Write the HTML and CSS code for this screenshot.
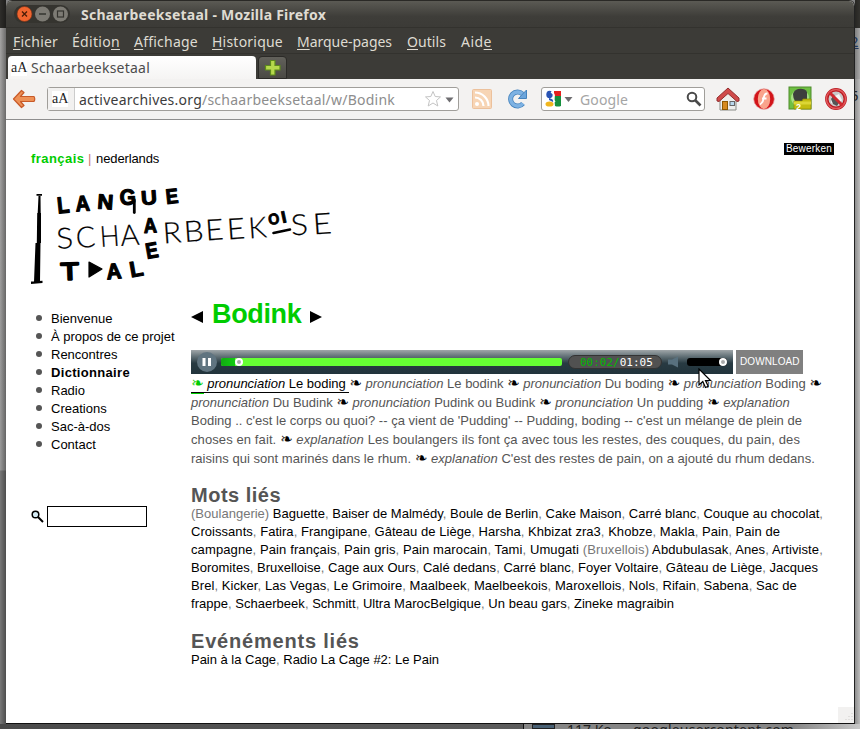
FILE: index.html
```html
<!DOCTYPE html>
<html lang="fr">
<head>
<meta charset="utf-8">
<title>Schaarbeeksetaal - Mozilla Firefox</title>
<link rel="stylesheet" href="styles.css">
</head>
<body>
<div class="desktop">
  <div class="edge edge-left"></div>
  <div class="window">
    <header class="titlebar">
      <svg class="winbtns" width="56" height="20" viewBox="0 0 56 20">
        <rect x="0" y="1" width="56" height="18" rx="9" fill="#35342f"/>
        <circle cx="10.500" cy="10" r="7.500" fill="#f0652f" stroke="#7d2f12" stroke-width=".6"/>
        <path d="M8 7.500l5 5M13 7.500l-5 5" stroke="#4a1d08" stroke-width="1.300"/>
        <circle cx="28.500" cy="10" r="7.500" fill="#7d7b74"/>
        <path d="M25 10h7" stroke="#35342f" stroke-width="1.300"/>
        <circle cx="46.500" cy="10" r="7.500" fill="#7d7b74"/>
        <rect x="43.500" y="7" width="6" height="6" fill="none" stroke="#35342f" stroke-width="1.200"/>
      </svg>
      <span class="wintitle">Schaarbeeksetaal - Mozilla Firefox</span>
    </header>
    <nav class="menubar">
      <span class="m1"><u>F</u>ichier</span><span class="m2">Éditio<u>n</u></span><span class="m3"><u>A</u>ffichage</span><span class="m4"><u>H</u>istorique</span><span class="m5"><u>M</u>arque-pages</span><span class="m6"><u>O</u>utils</span><span class="m7">Aid<u>e</u></span>
    </nav>
    <div class="tabs">
      <div class="tab"><span class="fav">aA</span><span class="tabname">Schaarbeeksetaal</span></div>
      <div class="newtab"><svg width="18" height="18" viewBox="0 0 18 18"><path d="M6.500 1.500h4.500v5h5v4.500h-5v5H6.500v-5h-5V6.500h5z" fill="#b5d94c" stroke="#5d8a1c" stroke-width="1.200"/></svg></div>
    </div>
    <div class="toolbar">
      <svg class="back" width="24" height="20" viewBox="0 0 24 20"><path d="M1.500 10L9.500 1.500 12 3.500 8.500 7.500H22q1.500 2.500 0 5H8.500l3.500 4-2.500 2z" fill="#ee9156" stroke="#c85a28" stroke-width="1.200" stroke-linejoin="round"/></svg>
      <div class="urlbar">
        <span class="favbox"><span class="fav">aA</span></span>
        <span class="url"><b>activearchives.org</b>/schaarbeeksetaal/w/Bodink</span>
        <svg class="star" width="30" height="18" viewBox="0 0 30 18"><path d="M9 1.500l2.200 5 5.300.4-4 3.600 1.300 5.500L9 13l-4.800 3 1.300-5.500-4-3.600 5.300-.4z" fill="#fff" stroke="#c4c4c4"/><path d="M21.500 7.500h8l-4 5z" fill="#6e6d70"/></svg>
      </div>
      <svg class="rss" width="20" height="20" viewBox="0 0 20 20"><rect x=".5" y=".5" width="19" height="19" rx="1" fill="#f7d5b5" stroke="#ecc19c"/><circle cx="5" cy="15" r="2" fill="#fff"/><path d="M3 8.500A8.500 8.500 0 0 1 11.500 17M3 3.500A13.500 13.500 0 0 1 16.500 17" fill="none" stroke="#fff" stroke-width="2.200"/></svg>
      <svg class="reload" width="20" height="20" viewBox="0 0 20 20"><path d="M15 14.500A7 7 0 1 1 14.500 5" fill="none" stroke="#4583bd" stroke-width="5"/><path d="M15 14.500A7 7 0 1 1 14.500 5" fill="none" stroke="#7db2e3" stroke-width="3.400"/><path d="M18.500 1v8.500H10.500z" fill="#6ba5dc" stroke="#4583bd"/></svg>
      <div class="search">
        <svg width="28" height="18" viewBox="0 0 28 18"><rect x="8" y="1" width="8" height="5" fill="#e5211e"/><path d="M9 6h7v10q-3 1-6 0z" fill="#16903e"/><rect x="0" y="1" width="9" height="15" fill="#fff"/><ellipse cx="4.500" cy="4.500" rx="3.200" ry="3.800" fill="#2a54b4"/><path d="M4 8q5 1 4 4l-4-2z" fill="#2a54b4"/><ellipse cx="4.500" cy="14" rx="4" ry="2.600" fill="#f0b51c"/><path d="M6 2q4 2 3 5t1 5" fill="none" stroke="#fff" stroke-width="1.500"/><path d="M19.500 7h8l-4 5z" fill="#6e6d70"/></svg>
        <span class="ph">Google</span>
        <svg class="lens" width="16" height="16" viewBox="0 0 16 16"><circle cx="6" cy="6" r="4.300" fill="none" stroke="#4a4a4a" stroke-width="2"/><path d="M9 9l5.500 5.500" stroke="#4a4a4a" stroke-width="2.600"/></svg>
      </div>
      <svg class="home" width="24" height="24" viewBox="0 0 24 24"><path d="M4 11l8-7 8 7v12H4z" fill="#eeeeec" stroke="#888a85"/><path d="M1 14v-3L12 1l11 10v3l-2 .5-9-8-9 8z" fill="#d04a4a" stroke="#932e2e"/><rect x="6.500" y="14.500" width="5" height="8" fill="#d68a20" stroke="#8f5902"/><rect x="14" y="14.500" width="4.500" height="4" fill="#b9d8ee" stroke="#666"/></svg>
      <svg class="flash" width="22" height="22" viewBox="0 0 22 22"><circle cx="11" cy="11" r="10.300" fill="#d2141a" stroke="#e5a0a0" stroke-width=".7"/><ellipse cx="11" cy="11" rx="6.200" ry="10" fill="#f9a48c"/><path d="M14.500 5.500q-3-.3-3.800 4.500T7 16.500M9 10.500h4.500" fill="none" stroke="#fff" stroke-width="1.800"/></svg>
      <svg class="evernote" width="24" height="26" viewBox="0 0 24 26"><rect x="1" y="1" width="22" height="22" fill="#6fc043" stroke="#4e8b2d"/><circle cx="12" cy="12" r="9" fill="#a9df86"/><path d="M5 8q1-4 5-5 7-1 9 3v9H7q-2-3-2-7z" fill="#3d3f3d"/><path d="M6 15h8l1-2h8v10H6z" fill="#c3bd10" stroke="#8d8804" stroke-width=".7"/><path d="M6 15.500h17v3H6z" fill="#dcd635"/><text x="8" y="23.500" class="badge">2</text></svg>
      <svg class="block" width="24" height="24" viewBox="0 0 24 24"><circle cx="12" cy="12" r="8.500" fill="#c9c9c9"/><path d="M7 16l1-9 3 2 4-2 3 6-4 5z" fill="#f6f6f6"/><path d="M7 12l3-5 1 4 4 5-2 3-4-2z" fill="#555"/><circle cx="12" cy="12" r="9.200" fill="none" stroke="#b91b22" stroke-width="3.400"/><circle cx="12" cy="12" r="9.600" fill="none" stroke="#e4595c" stroke-width="1.500"/><path d="M5.500 5.500l13 13" stroke="#cf2a30" stroke-width="3"/></svg>
    </div>
    <main class="page">
      <div class="top">
        <div class="langs"><b>français</b> <i>|</i> <a>nederlands</a></div>
        <span class="edit">Bewerken</span>
      </div>
      <svg class="logo" width="330" height="110" viewBox="20 180 330 110">
        <path d="M36.500 194h5.500v1.800h-5.500zM38.500 196h2l.2 17h-3zM37.200 213h3.800v30h-4.200zM35.500 243h5l-.5 39h-6zM31 281.500l11.500-.8v2.300l-11.500 1z"/>
        <g class="hand">
          <text transform="translate(58 213.500) rotate(-6) scale(.9 1.050)">L</text><text transform="translate(76 211.500) rotate(-4) scale(.9 1)">A</text><text transform="translate(97 208.500) rotate(4) scale(1 .95)">N</text><text transform="translate(120 205) rotate(-3) scale(.95 1)">G</text><text transform="translate(141.500 205) rotate(-4) scale(1 .9)">U</text><text transform="translate(166.500 204) rotate(-6) scale(.85 .95)">E</text>
          <text transform="translate(144 233) rotate(-3) scale(.83 .95)">A</text><text transform="translate(147 259) rotate(-10) scale(.85 1)">E</text>
          <text transform="translate(61 280) rotate(-2) scale(1.350 1.100)" class="lean">T</text><text transform="translate(107 279.500) rotate(-5) scale(.95 1)">A</text><text transform="translate(131 277.500) rotate(-10)">L</text>
          <text transform="translate(269 225) rotate(-8) scale(.65 .7)">O</text><text transform="translate(282.500 223) rotate(-12) scale(.8 .75)">I</text>
          <path d="M273.500 233l16.500-3.500" fill="none" stroke-width="2.600"/><path d="M134.300 200v12.500" fill="none" stroke-width="2.800"/>
          <path d="M89 262l13 7-13 8z"/>
        </g>
        <g class="thin">
          <text transform="translate(57 249) rotate(-4) scale(1.080 1)">S</text><text transform="translate(76.500 248) rotate(-4)">C</text><text transform="translate(100.500 247) rotate(-4) scale(.9 1)">H</text><text transform="translate(121 246) rotate(-4)">A</text><text transform="translate(163.500 243.500) rotate(-4) scale(1.050 1)">R</text><text transform="translate(184.500 242) rotate(-4) scale(1.080 1)">B</text><text transform="translate(206 240.500) rotate(-4) scale(1.080 1)">E</text><text transform="translate(227.500 239.500) rotate(-4) scale(1.080 1)">E</text><text transform="translate(249 238.500) rotate(-4)">K</text><text transform="translate(291.500 235.500) rotate(-4) scale(1.100 1)">S</text><text transform="translate(313.500 234.500) rotate(-4) scale(1.120 1)">E</text>
        </g>
      </svg>
      <div class="cols">
        <aside>
          <ul>
            <li>Bienvenue</li><li>À propos de ce projet</li><li>Rencontres</li><li class="on">Dictionnaire</li><li>Radio</li><li>Creations</li><li>Sac-à-dos</li><li>Contact</li>
          </ul>
          <div class="find"><svg width="13" height="13" viewBox="0 0 13 13"><circle cx="4.500" cy="4.500" r="3.300" fill="#d5ecf5" stroke="#000" stroke-width="1.500"/><path d="M7 7l5 5" stroke="#000" stroke-width="2"/></svg><span class="field"></span></div>
        </aside>
        <article>
          <h1><svg width="12" height="12" viewBox="0 0 12 12"><path d="M12 0v12L0 6z"/></svg><span>Bodink</span><svg width="12" height="12" viewBox="0 0 12 12"><path d="M0 0v12l12-6z"/></svg></h1>
          <div class="media">
            <div class="player">
              <svg width="20" height="20" viewBox="0 0 20 20"><circle cx="10" cy="10" r="10" fill="#607480"/><path d="M5.500 6h3v8h-3zM11 6h3v8h-3z" fill="#fff"/></svg>
              <div class="track"><span class="done"></span><span class="knob"></span></div>
              <div class="time"><em>00:02/</em>01:05</div>
              <svg class="spk" width="11" height="12" viewBox="0 0 11 12"><path d="M0 3.500h4L10 .5v11L4 8.500H0z" fill="#58707e"/></svg>
              <div class="vol"><span class="knob"></span></div>
            </div>
            <span class="download">DOWNLOAD</span>
          </div>
          <div class="lines story">
            <p class="s1"><span class="cur"><s>❧</s> <i>pronunciation</i> Le boding </span><s>❧</s> <i>pronunciation</i> Le bodink <s>❧</s> <i>pronunciation</i> Du boding <s>❧</s> <i>pronunciation</i> Boding <s>❧</s></p>
            <p class="s2"><i>pronunciation</i> Du Budink <s>❧</s> <i>pronunciation</i> Pudink ou Budink <s>❧</s> <i>pronunciation</i> Un pudding <s>❧</s> <i>explanation</i></p>
            <p class="s3">Boding .. c'est le corps ou quoi? -- ça vient de 'Pudding' -- Pudding, boding -- c'est un mélange de plein de</p>
            <p class="s4">choses en fait. <s>❧</s> <i>explanation</i> Les boulangers ils font ça avec tous les restes, des couques, du pain, des</p>
            <p class="s5">raisins qui sont marinés dans le rhum. <s>❧</s> <i>explanation</i> C'est des restes de pain, on a ajouté du rhum dedans.</p>
          </div>
          <h2 class="h2a">Mots liés</h2>
          <div class="lines links">
            <p class="k1"><q>(Boulangerie)</q> Baguette<q>,</q> Baiser de Malmédy<q>,</q> Boule de Berlin<q>,</q> Cake Maison<q>,</q> Carré blanc<q>,</q> Couque au chocolat<q>,</q></p>
            <p class="k2">Croissants<q>,</q> Fatira<q>,</q> Frangipane<q>,</q> Gâteau de Liège<q>,</q> Harsha<q>,</q> Khbizat zra3<q>,</q> Khobze<q>,</q> Makla<q>,</q> Pain<q>,</q> Pain de</p>
            <p class="k3">campagne<q>,</q> Pain français<q>,</q> Pain gris<q>,</q> Pain marocain<q>,</q> Tami<q>,</q> Umugati <q>(Bruxellois)</q> Abdubulasak<q>,</q> Anes<q>,</q> Artiviste<q>,</q></p>
            <p class="k4">Boromites<q>,</q> Bruxelloise<q>,</q> Cage aux Ours<q>,</q> Calé dedans<q>,</q> Carré blanc<q>,</q> Foyer Voltaire<q>,</q> Gâteau de Liège<q>,</q> Jacques</p>
            <p class="k5">Brel<q>,</q> Kicker<q>,</q> Las Vegas<q>,</q> Le Grimoire<q>,</q> Maalbeek<q>,</q> Maelbeekois<q>,</q> Maroxellois<q>,</q> Nols<q>,</q> Rifain<q>,</q> Sabena<q>,</q> Sac de</p>
            <p class="k6">frappe<q>,</q> Schaerbeek<q>,</q> Schmitt<q>,</q> Ultra MarocBelgique<q>,</q> Un beau gars<q>,</q> Zineke magraibin</p>
          </div>
          <h2 class="h2b">Evénéments liés</h2>
          <div class="lines links"><p class="k7">Pain à la Cage<q>,</q> Radio La Cage #2: Le Pain</p></div>
        </article>
      </div>
      <svg class="grip" width="16" height="16" viewBox="0 0 16 16"><rect width="16" height="16" fill="#f2f1f0"/><path d="M14 6v9M11 9v6M8 12v3" stroke="#cfcdca" stroke-width="1" stroke-dasharray="1 2"/></svg>
    </main>
  </div>
  <div class="edge edge-right"><span class="r1">2</span><span class="r2">5</span></div>
  <div class="under"><span class="under-dark"></span><span class="under-list"><span class="thumb"></span><span class="size">117 Ko</span><span class="host">googleusercontent.com</span></span></div>
</div>
<svg class="pointer" width="14" height="21" viewBox="0 0 14 21"><path d="M1 1v16l3.800-3.500 2.700 6 2.700-1.200-2.700-5.800h5z" fill="#fff" stroke="#000" stroke-width="1.200"/></svg>
</body>
</html>
```
FILE: styles.css
```css
* { box-sizing: border-box; }
body { margin: 0; width: 860px; height: 729px; overflow: hidden; font: 13px/18px "Liberation Sans", sans-serif; color: #000; }
p, h1, h2, ul { margin: 0; padding: 0; }
svg { display: block; flex: none; }
.desktop { display: grid; grid-template-columns: 6px 849px 5px; grid-template-rows: 724px 5px; background: #858585; }
.edge { overflow: hidden; }
.edge-left { background: linear-gradient(90deg, transparent, rgba(0,0,0,.35)), linear-gradient(#2e2d2a 28px, #a5a4a3 28px, #999 470px, #777 471px); }
.edge-right { background: linear-gradient(90deg, rgba(0,0,0,.25), transparent), linear-gradient(#33322e 28px, #a9a9a9 28px, #a9a9a9 79px, #bcbcbc 79px); display: flex; flex-direction: column; font: 15px/20px "Noto Sans", sans-serif; color: #20365c; }
.r1 { margin-top: 31px; margin-left: -5px; text-decoration: underline; }
.r2 { margin-top: 34px; margin-left: -5px; color: #222; }
.under { grid-column: 1 / 4; display: flex; overflow: hidden; background: #4a4948; }
.under-dark { width: 524px; border-right: 1px solid #111; background: linear-gradient(90deg, #4a4a4a, #5c5c5c); }
.under-list { flex: 1; display: flex; background: linear-gradient(90deg, #858585 80%, #c8c8c8); font: 14px/11px "Noto Sans", sans-serif; color: #222; }
.thumb { width: 23px; margin: 0 12px 0 8px; background: #486074; border: 1px solid #222; }
.size { width: 66px; }
.host { letter-spacing: .2px; }
.window { display: flex; flex-direction: column; background: #fff; border-right: 1px solid #222; border-bottom: 1px solid #111; border-top: 1px solid #2a2926; border-radius: 6px 6px 0 0; overflow: hidden; }
.titlebar { height: 27px; display: flex; align-items: center; padding-left: 8px; background: linear-gradient(#5b5a54, #3e3d39 60%, #3c3b37); border-bottom: 1px solid #33322e; }
.winbtns { margin-right: 11px; }
.wintitle { padding-top: 2px; font: bold 14px/20px "Noto Sans", sans-serif; letter-spacing: .237px; color: #dfdbd2; white-space: nowrap; }
.menubar { height: 26px; display: flex; gap: 14px; padding: 4px 0 0 7px; background: #3c3b37; border-bottom: 1px solid #33322e; color: #dfdbd2; font: 14px/20px "Noto Sans", sans-serif; }
.menubar u { text-underline-offset: 2px; }
.menubar span { white-space: nowrap; letter-spacing: .22px; }
.menubar .m2 { letter-spacing: .31px; }
.menubar .m5 { letter-spacing: -.03px; }
.menubar .m6 { letter-spacing: .07px; }
.menubar .m7 { letter-spacing: .48px; }
.m1 { width: 45px; } .m2 { width: 48px; } .m3 { width: 64px; } .m4 { width: 71px; } .m5 { width: 96px; } .m6 { width: 40px; }
.tabs { height: 25px; display: flex; align-items: flex-end; gap: 2px; padding-left: 2px; background: #3c3b37; }
.tab { width: 248px; height: 23px; display: flex; align-items: center; background: linear-gradient(#fff, #f5f4f3); border-radius: 4px 4px 0 0; font: 14px/20px "Noto Sans", sans-serif; color: #4c4c4c; padding-left: 3px; gap: 4px; }
.tabname { letter-spacing: .225px; }
.fav { width: 16px; font: 14px/16px "Liberation Serif", serif; color: #222; background: #fff; white-space: nowrap; }
.newtab { width: 29px; height: 23px; background: linear-gradient(#62615b, #4a4944); border: 1px solid #2b2a27; border-radius: 4px 4px 0 0; display: flex; align-items: center; justify-content: center; }
.toolbar { height: 41px; display: flex; align-items: center; background: #f3f2f1; border-bottom: 1px solid #8e8e8e; padding-left: 6px; }
.urlbar, .search { height: 24px; border: 1px solid #a09e9a; border-radius: 3px; background: #fff; display: flex; align-items: center; font: 14px/20px "Noto Sans", sans-serif; color: #8d8d8d; }
.urlbar { width: 412px; margin-left: 11px; white-space: nowrap; }
.favbox { width: 27px; height: 22px; padding: 3px 0 0 4px; border-right: 1px solid #ccc; background: #f2f1f0; }
.favbox .fav { display: block; }
.url { width: 345px; padding-top: 1px; margin-left: 4px; letter-spacing: .233px; }
.url b { font-weight: normal; color: #3c3c3c; }
.rss { margin-left: 13px; }
.reload { margin-left: 16px; }
.search { width: 164px; margin-left: 13px; padding-left: 3px; }
.ph { width: 106px; padding-top: 1px; margin-left: 7px; letter-spacing: .12px; color: #a5a5a5; }
.home { margin-left: 11px; }
.flash { margin-left: 13px; }
.evernote { margin-left: 13px; }
.block { margin-left: 12px; }
.badge { font: bold 9px "Liberation Sans", sans-serif; fill: #fff; }
.page { flex: 1; position: relative; color: #555; }
.top { display: flex; justify-content: space-between; padding: 23px 20px 0 25px; height: 60px; }
.langs { padding-top: 7px; }
.langs b { color: #0c0; letter-spacing: .45px; }
.langs i { color: #c77; font-style: normal; }
.langs a { color: #000; margin-left: 1px; letter-spacing: -.13px; }
.edit { width: 50px; height: 12px; background: #000; color: #fff; font-size: 10px; line-height: 12px; letter-spacing: .19px; padding: 0 2px; }
.logo { margin-left: 14px; }
.hand { font: bold 22px "Liberation Sans", sans-serif; stroke: #000; stroke-width: 1.2; stroke-linejoin: round; stroke-linecap: round; }
.lean { font-weight: normal; stroke-width: 2; }
.thin { font: 300 29px Lato, sans-serif; stroke: #000; stroke-width: .2; }
.cols { display: flex; padding-left: 25px; }
aside { width: 160px; padding-top: 20px; }
aside ul { list-style: none; color: #000; }
li { display: flex; align-items: center; white-space: nowrap; }
li::before { content: ""; width: 6px; height: 6px; border-radius: 50%; background: #555; margin: 0 9px 2px 5px; }
.on { font-weight: bold; letter-spacing: .32px; }
.find { display: flex; align-items: center; gap: 3px; margin-top: 52px; }
.field { width: 100px; height: 21px; border: 1px solid #000; }
article { padding-top: 6px; }
h1 { display: flex; align-items: center; height: 36px; color: #0c0; font-size: 27px; line-height: 36px; gap: 9px; }
h1 span { letter-spacing: -.35px; }
h1 svg { margin-top: 5px; fill: #000; }
.media { display: flex; gap: 3px; margin-top: 18px; }
.player { width: 542px; height: 24px; padding-left: 6px; display: flex; align-items: center; background: linear-gradient(#a0a6a9, #66747a 25%, #283a42 55%, #22343c); }
.track { width: 341px; height: 8px; margin-left: 4px; border-radius: 2px; background: #6f3; display: flex; align-items: center; }
.done { width: 14px; height: 8px; border-radius: 2px 0 0 2px; background: linear-gradient(90deg, #1a1, #1c1); }
.knob { width: 8px; height: 8px; border-radius: 50%; background: #aaa; border: 2px solid #fff; }
.time { width: 94px; height: 14px; margin-left: 6px; padding-left: 11px; border-radius: 7px; background: #515151; border: 1px solid #333; color: #fff; font: 11px/13px "DejaVu Sans Mono", monospace; white-space: nowrap; }
.time em { font-style: normal; color: #0b0; }
.spk { margin-left: 6px; }
.vol { width: 40px; height: 8px; margin-left: 8px; border-radius: 3px; background: #000; display: flex; justify-content: flex-end; align-items: center; }
.download { width: 67px; height: 24px; background: #808080; color: #fff; font-size: 10px; line-height: 23px; letter-spacing: .1px; padding-left: 4px; white-space: nowrap; }
.lines { width: 640px; }
.lines p { white-space: nowrap; }
.lines s { text-decoration: none; color: #000; font: 15px/14px "DejaVu Sans", sans-serif; letter-spacing: 0; }
.story { padding-top: 1px; }
.story p { height: 18.700px; line-height: 18.700px; }
.s1 { letter-spacing: -.01px; }
.s3 { letter-spacing: .011px; }
.s4 { letter-spacing: .1px; }
.s5 { letter-spacing: .03px; }
.k1 { letter-spacing: .012px; }
.k2 { letter-spacing: .043px; }
.k3 { letter-spacing: .106px; }
.k4 { letter-spacing: .017px; }
.k5 { letter-spacing: .066px; }
.k6 { letter-spacing: .021px; }
.k7 { letter-spacing: -.016px; }
.cur { color: #000; border-bottom: 1px solid #000; padding-bottom: 1px; }
.cur s { color: #0c0; border-bottom: 1px solid #0c0; padding-bottom: 1px; }
q { quotes: none; color: #777; }
.links { color: #000; }
h2 { font-size: 20px; line-height: 20px; color: #555; white-space: nowrap; }
.h2a { margin-top: 17px; letter-spacing: .5px; }
.h2b { margin-top: 18px; letter-spacing: .8px; }
.grip { position: absolute; right: 0; bottom: 0; }
.pointer { position: absolute; left: 698px; top: 368px; }
```
